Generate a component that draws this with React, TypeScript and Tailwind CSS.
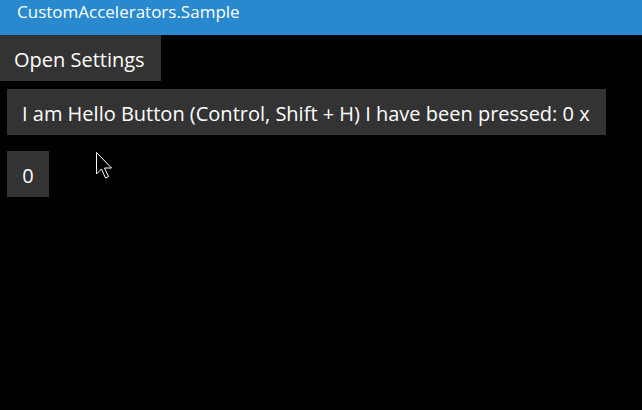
import React from 'react';

function Cursor() {
  return (
    <svg width="18" height="30" viewBox="0 0 18 30" className="absolute left-[96px] top-[152px]">
      <path
        d="M0.5 0.5 L0.5 22 L5.5 17 L9.5 26 L12.5 24.5 L8.5 16 L15.5 16 Z"
        fill="#000"
        stroke="#fff"
        strokeWidth="1"
        strokeLinejoin="miter"
      />
    </svg>
  );
}

export default function App() {
  return (
    <div className="relative w-[642px] h-[410px] bg-black overflow-hidden text-white font-['Open_Sans',sans-serif]">
      <div className="h-[35px] bg-[#2889cf] pl-[17px] text-[17px] leading-[24px]">CustomAccelerators.Sample</div>
      <div className="flex flex-col items-start">
        <button className="h-[46px] bg-[#333333] pl-[14px] pr-[16px] pt-[3px] text-[20px]">Open Settings</button>
        <button className="mt-[8px] ml-[7px] h-[46px] bg-[#333333] pl-[15px] pr-[16px] pt-[3px] text-[20px]">
          I am Hello Button (Control, Shift + H) I have been pressed: 0 x
        </button>
        <button className="mt-[16px] ml-[7px] h-[46px] w-[42px] bg-[#333333] pt-[3px] text-[20px]">0</button>
      </div>
      <Cursor />
    </div>
  );
}
